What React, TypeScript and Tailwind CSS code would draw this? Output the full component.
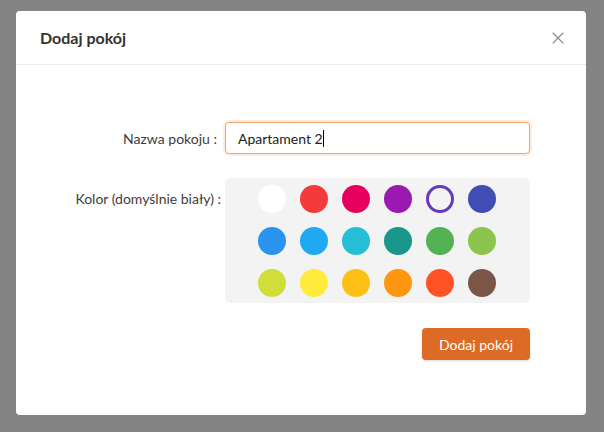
import { X } from "lucide-react";

const COLORS = [
  "#ffffff", "#f43a3a", "#e8005f", "#9a19b0", "selected", "#3f4db5",
  "#2a94ef", "#1fa9f2", "#24bfd7", "#18978a", "#52b254", "#8dc44d",
  "#d0dd3b", "#ffeb3b", "#fdc115", "#ff960f", "#ff5326", "#7a5548",
];

export default function App() {
  return (
    <div
      className="w-[604px] h-[432px] bg-[#848484] pt-[11px] px-4"
      style={{ fontFamily: "Lato, 'Noto Sans', sans-serif" }}
    >
      <div className="w-[570px] h-[404px] bg-white rounded-[4px] flex flex-col">
        <div className="h-[54px] flex items-center justify-between pl-6 pr-[18px] border-b border-[#ebebeb]">
          <h1 className="text-[16px] font-bold text-[#333]">Dodaj pokój</h1>
          <X size={20} strokeWidth={1.3} className="text-[#8a8a8a]" />
        </div>

        <div className="pt-[57px] pr-[56px] flex flex-col">
          <div className="flex items-center">
            <div className="w-[209px] pr-2 text-right text-[14px] text-[#3d3d3d]">
              Nazwa pokoju :
            </div>
            <div className="flex-1 h-8 border border-[#f2a46c] rounded-[4px] shadow-[0_0_0_2px_rgba(245,150,80,0.18)] flex items-center px-3 text-[14px] text-[#222]">
              Apartament 2
              <span className="w-px h-[17px] bg-black" />
            </div>
          </div>

          <div className="flex mt-6">
            <div className="w-[209px] pr-1 pt-[10px] text-right text-[14px] text-[#3d3d3d]">
              Kolor (domyślnie biały) :
            </div>
            <div className="flex-1 bg-[#f3f3f3] rounded-[6px] pl-[33px] pt-[7px] pb-[6px] grid grid-cols-[repeat(6,28px)] gap-x-[14px] gap-y-[14px]">
              {COLORS.map((c, i) =>
                c === "selected" ? (
                  <div
                    key={i}
                    className="w-7 h-7 rounded-full border-[3px] border-[#673ab7] bg-[#f3f3f3]"
                  />
                ) : (
                  <div key={i} className="w-7 h-7 rounded-full" style={{ backgroundColor: c }} />
                )
              )}
            </div>
          </div>

          <div className="flex justify-end mt-[25px]">
            <button className="h-8 px-[17px] rounded-[4px] bg-[#dd6a25] text-white text-[14px] shadow-[0_1px_2px_rgba(0,0,0,0.15)]">
              Dodaj pokój
            </button>
          </div>
        </div>
      </div>
    </div>
  );
}
